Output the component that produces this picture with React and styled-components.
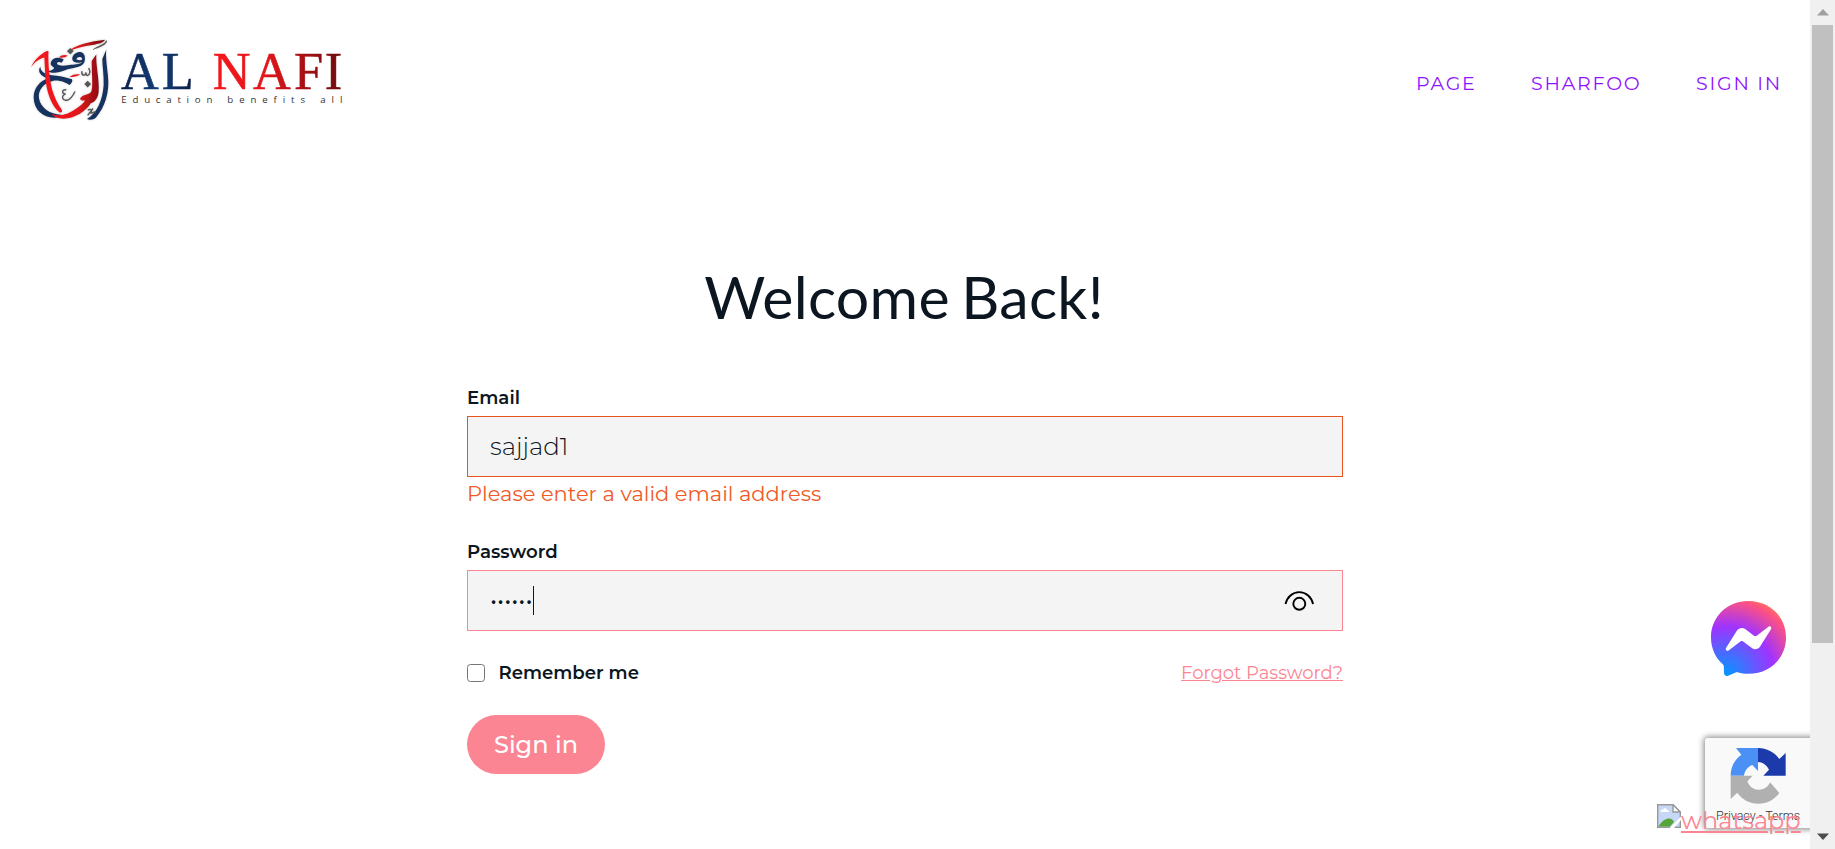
import React from "react";
import styled, { createGlobalStyle } from "styled-components";

const Global = createGlobalStyle`
  * { box-sizing: border-box; }
  body {
    margin: 0;
    background: #fff;
    color: #0c1620;
    font-family: Montserrat, Inter, "Liberation Sans", sans-serif;
    overflow: hidden;
  }
`;

const Screen = styled.div`
  display: flex;
  height: 849px;
  overflow: hidden;
`;

const Page = styled.div`
  flex: 1;
  display: flex;
  flex-direction: column;
`;

const Header = styled.header`
  display: flex;
  align-items: center;
  justify-content: space-between;
  height: 166px;
  padding: 0 28px 6px 20px;
`;

const LogoArt = styled.svg`
  width: 330px;
  height: 100px;
  font-variant-ligatures: none;
`;

const Nav = styled.nav`
  display: flex;
  gap: 54.5px;
  padding-top: 8px;
`;

const NavLink = styled.a`
  color: #9013fe;
  font-size: 19px;
  line-height: 28px;
  letter-spacing: 1.75px;
  white-space: nowrap;
`;

const Form = styled.form`
  width: 876px;
  margin: 0 auto;
  padding-top: 95px;
`;

const Title = styled.h1`
  margin: 0 -4px 52px -6px;
  font: 400 59px/72px Lato, sans-serif;
  letter-spacing: 0.3px;
  word-spacing: -4px;
  text-align: center;
`;

const Field = styled.div`
  display: flex;
  flex-direction: column;
  height: ${(p) => p.$height};
`;

const Label = styled.label`
  font-size: 18.2px;
  font-weight: 600;
  line-height: 25px;
`;

const InputBox = styled.div`
  display: flex;
  align-items: center;
  height: 61px;
  margin-top: 6px;
  padding: 0 26px 0 22px;
  border: 1px solid ${(p) => p.$border};
  background: #f4f4f4;
`;

const Value = styled.span`
  font-size: 24.5px;
  font-weight: 300;
  line-height: 30px;
  margin-top: -2px;
`;

const Dots = styled.span`
  font-size: 24px;
  line-height: 30px;
`;

const Caret = styled.span`
  width: 1px;
  height: 29px;
  margin-left: 1px;
  background: #0c1620;
`;

const EyeIcon = styled.svg`
  width: 32px;
  height: 22px;
  margin-left: auto;
`;

const ErrorText = styled.p`
  margin: 4px 0 0;
  color: #f05a28;
  font-size: 21px;
  line-height: 26px;
`;

const Options = styled.div`
  display: flex;
  align-items: center;
  justify-content: space-between;
  height: 24px;
  margin-bottom: 30px;
`;

const Remember = styled.label`
  display: flex;
  align-items: center;
  gap: 13.5px;
  font-size: 18.1px;
  font-weight: 600;
  line-height: 24px;
`;

const Checkbox = styled.span`
  width: 18px;
  height: 18px;
  border: 1px solid #767676;
  border-radius: 3.5px;
  background: #fff;
`;

const ForgotLink = styled.a`
  color: #fc8593;
  font-size: 18px;
  line-height: 24px;
  text-decoration: underline;
`;

const SubmitButton = styled.button`
  width: 138px;
  height: 59px;
  padding: 0;
  border: 0;
  border-radius: 30px;
  background: #fc8593;
  color: #fff;
  font: 500 24px/30px Montserrat, Inter, sans-serif;
`;

const MessengerBubble = styled.svg`
  position: absolute;
  left: 1711px;
  top: 601px;
  width: 75px;
  height: 75px;
`;

const CaptchaClip = styled.div`
  position: absolute;
  left: 1690px;
  top: 723px;
  width: 120px;
  height: 126px;
  overflow: hidden;
`;

const CaptchaBadge = styled.div`
  width: 130px;
  height: 90px;
  margin: 15px 0 0 15px;
  padding: 8px 0 0 21px;
  border-radius: 3px;
  background: #f9f9f9;
  box-shadow: 0 0 6px 1px #808080;
`;

const CaptchaIcon = styled.svg`
  display: block;
  width: 60px;
  height: 60px;
`;

const CaptchaText = styled.div`
  margin: 3px 0 0 -10px;
  color: #333;
  font: 300 12.5px/14px Roboto, sans-serif;
  white-space: nowrap;
`;

const WhatsappLink = styled.a`
  position: absolute;
  left: 1657px;
  top: 804px;
  display: flex;
  color: #fc8593;
  font-size: 24px;
  line-height: 33px;
  text-decoration: underline;
`;

const BrokenImage = styled.svg`
  width: 24px;
  height: 24px;
`;

const ScrollTrack = styled.div`
  display: flex;
  flex-direction: column;
  align-items: center;
  width: 25px;
  padding: 9px 0;
  background: #f0f0f0;
`;

const ScrollThumb = styled.div`
  width: 21px;
  height: 618px;
  margin: 9px 0 auto;
  background: #c0c0c0;
`;

const Arrow = styled.svg`
  width: 12px;
  height: 7px;
`;

function Logo() {
  return (
    <LogoArt viewBox="0 0 990 300" aria-label="Al Nafi">
      <defs>
        <linearGradient id="navy" gradientUnits="userSpaceOnUse" x1="305" y1="0" x2="520" y2="0">
          <stop offset="0" stopColor="#0b1e45" />
          <stop offset=".5" stopColor="#143f7c" />
          <stop offset="1" stopColor="#0b1e45" />
        </linearGradient>
        <linearGradient id="red" gradientUnits="userSpaceOnUse" x1="578" y1="0" x2="964" y2="0">
          <stop offset="0" stopColor="#f5161c" />
          <stop offset=".4" stopColor="#e5161b" />
          <stop offset="1" stopColor="#6d0b0e" />
        </linearGradient>
        <linearGradient id="swash" gradientUnits="userSpaceOnUse" x1="60" y1="0" x2="250" y2="0">
          <stop offset="0" stopColor="#f5161c" />
          <stop offset=".6" stopColor="#e5161b" />
          <stop offset="1" stopColor="#7e0d12" />
        </linearGradient>
        <filter id="halo" x="-10%" y="-10%" width="120%" height="120%">
          <feDropShadow dx="0" dy="0" stdDeviation="3" floodColor="#555" floodOpacity=".35" />
        </filter>
      </defs>
      <g filter="url(#halo)" transform="translate(-1 -1) scale(1 1.02)">
        <g fill="#12305f">
          <path d="M62 108C52 124 64 138 86 143C60 151 42 172 42 200C43 236 70 258 104 259C114 259 121 255 124 250C92 250 62 230 58 202C54 177 74 155 101 150C118 147 140 155 150 163C156 158 160 150 157 146C134 138 116 136 96 134C76 130 62 124 62 108Z" />
          <path fillRule="evenodd" d="M94 95C101 79 121 81 132 88L126 97C116 93 109 96 113 102C121 108 134 106 150 104C162 103 180 102 188 96C176 99 160 98 158 88C156 76 170 64 182 66C196 68 198 84 194 96C186 114 152 112 134 120C120 126 98 130 84 122C92 121 104 117 103 111C94 107 91 101 94 95ZM170 88C178 92 187 90 188 86C186 79 172 78 170 88Z" />
          <path d="M248 86L260 58C257 76 262 107 265 137C270 184 256 228 229 258C222 265 210 266 202 263C232 246 249 207 252 163C253 134 248 107 248 86Z" />
        </g>
        <g fill="url(#swash)">
          <path d="M34 112C40 92 64 70 82 63C89 61 86 67 86 73C86 94 87 120 91 142C95 176 106 206 124 232C130 240 127 246 119 243C94 222 80 182 77 139L74 82C58 86 42 97 34 112Z" />
          <path d="M96 248C120 256 146 250 170 232C182 224 192 216 196 208C186 210 178 205 183 200C190 190 207 192 214 183C221 174 216 132 216 92L230 72C228 104 240 151 237 182C236 202 224 214 214 216C198 244 150 270 116 260C105 257 99 253 96 248Z" />
          <path d="M139 68C166 45 214 34 256 30C252 38 239 42 224 44C198 47 163 54 139 68Z" />
          <path d="M149 139C161 131 171 130 182 132C173 137 161 141 149 139Z" />
          <path d="M117 82C124 74 136 73 144 76C139 82 128 83 117 82Z" />
        </g>
        <g fill="#565656">
          <path d="M152 54L162 63L152 73L142 63ZM204 150L214 160L204 170L194 160Z" />
          <path d="M217 60C230 47 253 45 258 33L262 31C263 45 241 51 217 60Z" />
        </g>
        <g fill="none" stroke="#555" strokeWidth="4">
          <path d="M187 122C184 135 196 139 199 126C198 139 209 137 211 123L207 113" />
          <path d="M140 177C126 174 125 189 138 189C122 194 128 211 144 207C153 205 158 198 166 182" />
          <path d="M204 237C216 229 219 242 211 244C216 249 226 238 228 244M220 232L204 252" />
        </g>
      </g>
      <g fontFamily='"Liberation Serif", serif' fontSize="157" strokeWidth="1.5">
        <text x="303 425" y="176" fill="url(#navy)" stroke="url(#navy)">AL</text>
        <text x="578 699 822 914" y="176" fill="url(#red)" stroke="url(#red)">NAFI</text>
      </g>
      <g fill="#333" fontFamily='"Open Sans", sans-serif' fontSize="29" fontWeight="500">
        <text x="304" y="219" textLength="273" lengthAdjust="spacing">Education</text>
        <text x="622" y="219" textLength="233" lengthAdjust="spacing">benefits</text>
        <text x="901" y="219" textLength="66" lengthAdjust="spacing">all</text>
      </g>
    </LogoArt>
  );
}

function Messenger() {
  return (
    <MessengerBubble viewBox="0 0 75 75">
      <defs>
        <radialGradient id="chat" cx=".19" cy=".99" r="1.09">
          <stop offset="0" stopColor="#0099ff" />
          <stop offset=".6" stopColor="#a033ff" />
          <stop offset=".93" stopColor="#ff5280" />
          <stop offset="1" stopColor="#ff7061" />
        </radialGradient>
      </defs>
      <path fill="url(#chat)" d="M37.5 0C16.4 0 0 15.5 0 36.4C0 47.3 4.5 56.8 11.8 63.2C12.4 63.8 12.8 64.6 12.8 65.4L13 72.1C13.1 74.2 15.2 75.7 17.2 74.8L24.7 71.5C25.3 71.2 26 71.1 26.7 71.3C30.1 72.3 33.7 72.8 37.5 72.8C58.6 72.8 75 57.3 75 36.4C75 15.5 58.6 0 37.5 0Z" />
      <path fill="#fff" d="M15 47L26 29.6C27.8 26.8 31.5 26 34.2 28.1L43 34.7C43.8 35.3 44.9 35.3 45.7 34.7L57.5 25.7C59.1 24.5 61.1 26.4 60.1 28.1L49.1 45.6C47.3 48.4 43.6 49.2 40.9 47.1L32.1 40.5C31.3 39.9 30.2 39.9 29.4 40.5L17.6 49.5C16 50.7 14 48.8 15 47Z" />
    </MessengerBubble>
  );
}

function Captcha() {
  return (
    <CaptchaClip>
      <CaptchaBadge>
        <CaptchaIcon viewBox="258 49 180 180">
          <path fill="#4a90f5" d="M272 138C272 112 284 89 304 75L288 55H354V124L337 106C322 112 314 124 312 138Z" />
          <path fill="#1c3aa9" d="M354 55C380 55 403 67 418 88L437 70V138H370L387 120C380 106 369 98 354 97Z" />
          <path fill="#b0b0b0" d="M272 138H338L322 155C330 175 344 181 357 180C373 180 385 171 390 158L418 190C402 211 381 222 355 222C329 222 307 210 292 189L272 208Z" />
        </CaptchaIcon>
        <CaptchaText>Privacy - Terms</CaptchaText>
      </CaptchaBadge>
    </CaptchaClip>
  );
}

function Whatsapp() {
  return (
    <WhatsappLink>
      <BrokenImage viewBox="0 0 24 24">
        <path d="M.7.7H16L23.3 8V23.3H.7Z" fill="#c6d8f5" stroke="#999" strokeWidth="1.4" />
        <path d="M16 .7V8H23.3Z" fill="#fff" stroke="#999" strokeWidth="1.4" />
        <path d="M3.5 8C3.5 6 5 5.5 6 5.5C7 3.5 10 4 10 6C12 6 12.5 7 12 8Z" fill="#fff" />
        <path d="M1.4 22.6C5 16.5 9 14.5 12 14.5C14.5 14.5 16 16 17 18L13 22.6Z" fill="#55a63a" />
        <path d="M24 12.5V16L17 24H12.5Z" fill="#fff" />
      </BrokenImage>
      whatsapp
    </WhatsappLink>
  );
}

export default function App() {
  return (
    <>
      <Global />
      <Screen>
        <Page>
          <Header>
            <Logo />
            <Nav>
              <NavLink>PAGE</NavLink>
              <NavLink>SHARFOO</NavLink>
              <NavLink>SIGN IN</NavLink>
            </Nav>
          </Header>
          <Form>
            <Title>Welcome Back!</Title>
            <Field $height="154px">
              <Label>Email</Label>
              <InputBox $border="#e8541f">
                <Value>sajjad1</Value>
              </InputBox>
              <ErrorText>Please enter a valid email address</ErrorText>
            </Field>
            <Field $height="122px">
              <Label>Password</Label>
              <InputBox $border="#fc8593">
                <Dots>••••••</Dots>
                <Caret />
                <EyeIcon viewBox="0 0 32 22" fill="none" stroke="#000" strokeWidth="1.9">
                  <path d="M1.5 14C3.1 7 8.5 2.1 15.3 2.1C22.1 2.1 27.5 7 29.1 14" />
                  <circle cx="15.3" cy="13.8" r="6" />
                </EyeIcon>
              </InputBox>
            </Field>
            <Options>
              <Remember>
                <Checkbox />
                Remember me
              </Remember>
              <ForgotLink>Forgot Password?</ForgotLink>
            </Options>
            <SubmitButton type="button">Sign in</SubmitButton>
          </Form>
        </Page>
        <ScrollTrack>
          <Arrow viewBox="0 0 12 7">
            <path d="M0 6.5L6 0L12 6.5Z" fill="#a0a0a0" />
          </Arrow>
          <ScrollThumb />
          <Arrow viewBox="0 0 12 7">
            <path d="M0 .5H12L6 7Z" fill="#4d4d4d" />
          </Arrow>
        </ScrollTrack>
        <Messenger />
        <Captcha />
        <Whatsapp />
      </Screen>
    </>
  );
}
